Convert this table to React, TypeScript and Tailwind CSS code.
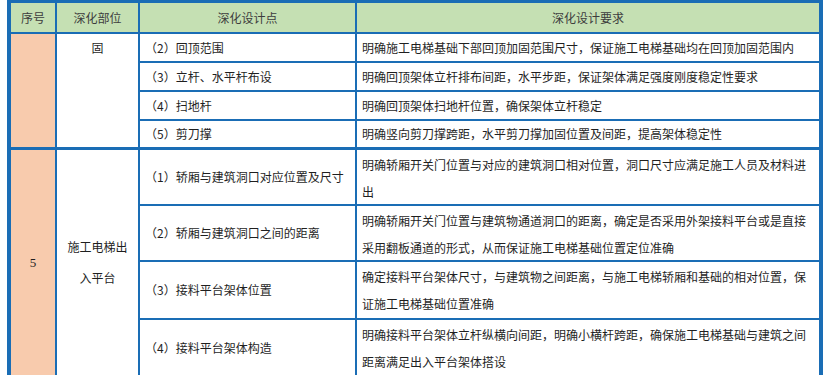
import React from "react";

const partOne = [
  { point: "（2）回顶范围", req: "明确施工电梯基础下部回顶加固范围尺寸，保证施工电梯基础均在回顶加固范围内" },
  { point: "（3）立杆、水平杆布设", req: "明确回顶架体立杆排布间距，水平步距，保证架体满足强度刚度稳定性要求" },
  { point: "（4）扫地杆", req: "明确回顶架体扫地杆位置，确保架体立杆稳定" },
  { point: "（5）剪刀撑", req: "明确竖向剪刀撑跨距，水平剪刀撑加固位置及间距，提高架体稳定性" },
];

const partTwo = [
  { point: "（1）轿厢与建筑洞口对应位置及尺寸", req: "明确轿厢开关门位置与对应的建筑洞口相对位置，洞口尺寸应满足施工人员及材料进出" },
  { point: "（2）轿厢与建筑洞口之间的距离", req: "明确轿厢开关门位置与建筑物通道洞口的距离，确定是否采用外架接料平台或是直接采用翻板通道的形式，从而保证施工电梯基础位置定位准确" },
  { point: "（3）接料平台架体位置", req: "确定接料平台架体尺寸，与建筑物之间距离，与施工电梯轿厢和基础的相对位置，保证施工电梯基础位置准确" },
  { point: "（4）接料平台架体构造", req: "明确接料平台架体立杆纵横向间距，明确小横杆跨距，确保施工电梯基础与建筑之间距离满足出入平台架体搭设" },
];

export default function App() {
  return (
    <div
      className="min-h-screen bg-white text-[12px] text-[#1f1f1f] [text-spacing-trim:space-all]"
      style={{ fontFamily: '"Noto Sans CJK SC", "Noto Sans", sans-serif' }}
    >
      <div className="ml-[7px] w-[816px] bg-[#1a6db5] px-[4px] pt-[3px] grid grid-cols-[44px_81px_215px_462px] grid-rows-[29px_27px_27px_27px_26px_55px_54px_56px_56px] gap-[2px]">
        {/* Header */}
        {["序号", "深化部位", "深化设计点", "深化设计要求"].map((h) => (
          <div key={h} className="bg-[#c5e0b3] flex items-center justify-center text-[#3d3d3d]">
            {h}
          </div>
        ))}

        {/* Part one (continued from above) */}
        <div className="row-span-4 bg-[#f8cbad]" />
        <div className="row-span-4 bg-white text-center leading-[27px]">固</div>
        {partOne.map((r) => (
          <React.Fragment key={r.point}>
            <div className="bg-white flex items-center pl-[5px]">{r.point}</div>
            <div className="bg-white flex items-center pl-[5px]">{r.req}</div>
          </React.Fragment>
        ))}

        {/* Part two */}
        <div className="row-span-4 mt-px bg-[#f8cbad] flex items-center justify-center">
          <span className="text-[13px]" style={{ fontFamily: '"Liberation Serif", serif' }}>
            5
          </span>
        </div>
        <div className="row-span-4 mt-px bg-white flex flex-col items-center justify-center pb-[3px] leading-[31px]">
          <span>施工电梯出</span>
          <span>入平台</span>
        </div>
        {partTwo.map((r, i) => (
          <React.Fragment key={r.point}>
            <div className={`bg-white flex items-center pl-[5px] ${i === 0 ? "mt-px" : ""}`}>{r.point}</div>
            <div className={`bg-white pl-[5px] pr-[8px] pt-px leading-[27px] ${i === 0 ? "mt-px" : ""}`}>
              {r.req}
            </div>
          </React.Fragment>
        ))}
      </div>
    </div>
  );
}
